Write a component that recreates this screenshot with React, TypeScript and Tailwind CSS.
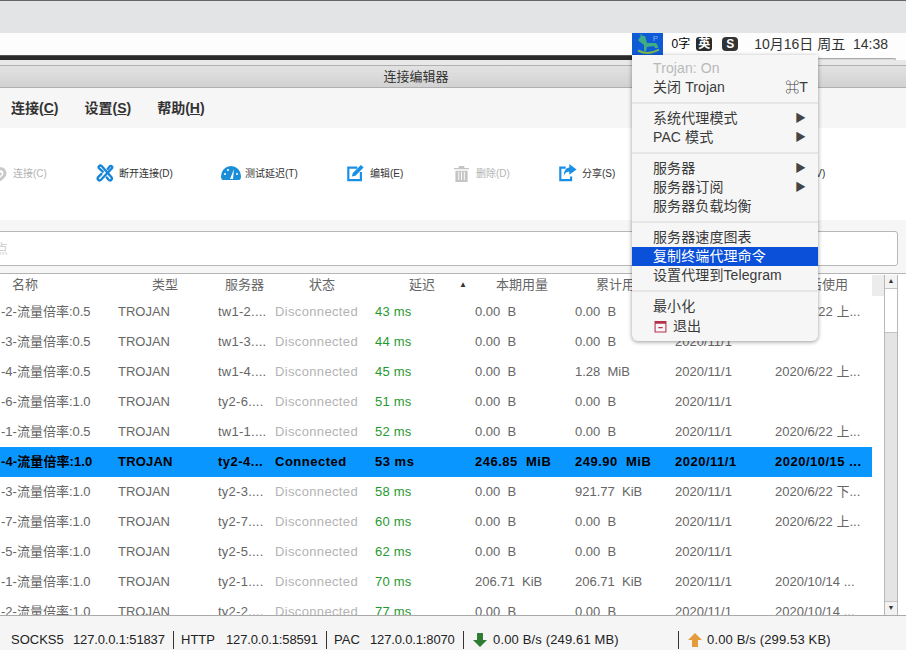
const rows = [
  ["-2-流量倍率:0.5","tw1-2....","43 ms","0.00  B","0.00  B","2020/11/1","2020/6/22 上..."],
  ["-3-流量倍率:0.5","tw1-3....","44 ms","0.00  B","0.00  B","2020/11/1",""],
  ["-4-流量倍率:0.5","tw1-4....","45 ms","0.00  B","1.28  MiB","2020/11/1","2020/6/22 上..."],
  ["-6-流量倍率:1.0","ty2-6....","51 ms","0.00  B","0.00  B","2020/11/1",""],
  ["-1-流量倍率:0.5","tw1-1....","52 ms","0.00  B","0.00  B","2020/11/1","2020/6/22 上..."],
  ["-4-流量倍率:1.0","ty2-4...","53 ms","246.85  MiB","249.90  MiB","2020/11/1","2020/10/15 ..."],
  ["-3-流量倍率:1.0","ty2-3....","58 ms","0.00  B","921.77  KiB","2020/11/1","2020/6/22 下..."],
  ["-7-流量倍率:1.0","ty2-7....","60 ms","0.00  B","0.00  B","2020/11/1","2020/6/22 上..."],
  ["-5-流量倍率:1.0","ty2-5....","62 ms","0.00  B","0.00  B","2020/11/1",""],
  ["-1-流量倍率:1.0","ty2-1....","70 ms","206.71  KiB","206.71  KiB","2020/11/1","2020/10/14 ..."],
  ["-2-流量倍率:1.0","ty2-2....","77 ms","0.00  B","0.00  B","2020/11/1","2020/10/14 ..."],
];
const font = { fontFamily: '"Liberation Sans","Noto Sans CJK SC",sans-serif' };

function Tool({ icon, label, w, dim, gap }: { icon: React.ReactNode; label: string; w: string; dim?: boolean; gap?: string }) {
  return (
    <div className={`flex items-center shrink-0 ${gap ?? "gap-[5px]"} ${w}`}>
      {icon}
      <span className={`text-[10px] whitespace-nowrap ${dim ? "text-[#b4b4b4]" : "text-[#333]"}`}>{label}</span>
    </div>
  );
}
function Row({ r, on }: { r: string[]; on: boolean }) {
  const c = on ? "text-black font-bold tracking-[0.5px]" : "text-[#666]";
  return (
    <div className={`flex h-[30px] items-center text-[13px] whitespace-pre shrink-0 w-[872px] ${on ? "bg-[#0a96ff]" : ""}`}>
      <span className={`w-[118px] shrink-0 pl-px ${on ? "text-black font-bold tracking-[0.1px]" : "text-[#666]"}`}>{r[0]}</span>
      <span className={`w-[100px] shrink-0 ${on ? "text-black font-bold tracking-[0.2px]" : "text-[#666]"}`}>TROJAN</span>
      <span className={`w-[57px] shrink-0 ${on ? c : "text-[#666] tracking-[0.25px]"}`}>{r[1]}</span>
      <span className={`w-[100px] shrink-0 ${on ? c : "text-[#b3b3b3] tracking-[0.35px]"}`}>{on ? "Connected" : "Disconnected"}</span>
      <span className={`w-[100px] shrink-0 ${on ? c : "text-[#1f9a2e] tracking-[0.2px]"}`}>{r[2]}</span>
      <span className={`w-[100px] shrink-0 ${c}`}>{r[3]}</span>
      <span className={`w-[100px] shrink-0 ${c}`}>{r[4]}</span>
      <span className={`w-[100px] shrink-0 ${c}`}>{r[5]}</span>
      <span className={`shrink-0 ${c}`}>{r[6]}</span>
    </div>
  );
}
function MI({ t, arrow, sc, active, dim, extra }: { t: React.ReactNode; arrow?: boolean; sc?: string; active?: boolean; dim?: boolean; extra?: string }) {
  return (
    <div className={`flex h-[19px] items-center pl-[21px] pr-[12px] justify-between text-[14px] tracking-[0.1px] whitespace-nowrap ${extra ?? ""} ${active ? "bg-[#0a50d8] text-white" : dim ? "text-[#b9b9b9]" : "text-[#3a3a3a]"}`}>
      <span className="flex items-center">{t}</span>
      {arrow && <span className="text-[11px] text-[#444]">▶</span>}
      {sc && <span className="text-[14px] -mr-[2px]">{sc}</span>}
    </div>
  );
}
const Sep = () => <div className="h-[12px] flex items-center"><div className="h-[2px] w-full bg-[#e6e6e6]" /></div>;
const Und = ({ a, b }: { a: string; b: string }) => <span className="text-[14px] font-bold text-[#333] whitespace-nowrap">{a}(<span className="underline">{b}</span>)</span>;
const Bar = () => <span className="w-px h-[18px] bg-[#333] shrink-0" />;

export default function App() {
  return (
    <div className="relative w-[906px] h-[650px] overflow-hidden bg-white flex flex-col" style={font}>
      <div className="h-[33px] bg-[#e3e4e6] border-t border-[#666] shrink-0" />
      <div className="h-[22px] bg-[#fdfdfd] shrink-0 flex items-center justify-end pr-[18px] text-[14px] text-[#333]">
        <span className="text-[12px] text-black mr-[6px]">0字</span>
        <span className="w-[16px] h-[14px] rounded-[3px] bg-[#2b2b2b] text-white text-[12px] font-bold flex items-center justify-center mr-[10px]">英</span>
        <span className="w-[16px] h-[14px] rounded-[4px] bg-[#333] text-white text-[12px] font-bold flex items-center justify-center mr-[16px]">S</span>
        <span className="whitespace-pre">10月16日 周五  14:38</span>
      </div>
      <div className="h-[5px] shrink-0 flex">
        <div className="w-[632px] shrink-0 bg-[#2b2b2b] border-t border-[#555]" />
        <div className="flex-1 bg-[#fdfdfd] pr-[10px]">
          <div className="mt-[3px] h-[2px] bg-[#d8d8d8] rounded-tr-[6px] border-t border-r border-[#aaa]" />
        </div>
      </div>
      <div className="h-[6px] shrink-0 bg-[#e8e8e8] border-b border-[#b0b0b0]" />
      <div className="h-[22px] shrink-0 bg-gradient-to-b from-[#e2e2e2] to-[#d2d2d2] border-b border-[#b0b0b0] flex items-center justify-center pr-[74px] text-[13px] text-[#333]">连接编辑器</div>
      <div className="h-[40px] shrink-0 bg-[#f6f6f6] flex items-center pl-[11px] gap-[26px]">
        <Und a="连接" b="C" /><Und a="设置" b="S" /><Und a="帮助" b="H" />
      </div>
      <div className="h-[92px] shrink-0 bg-white flex items-center pb-[2px] overflow-hidden">
        <Tool w="w-[103px] -ml-[7px]" gap="gap-[6px]" dim label="连接(C)" icon={<svg viewBox="0 0 14 18" className="w-[14px] h-[18px]"><path d="M3 9a4.500 4.500 0 1 1 8 3l-3 3c-2 2-5-1-3-3l3-3" fill="none" stroke="#c8c8c8" strokeWidth="3" /></svg>} />
        <Tool w="w-[125px]" label="断开连接(D)" icon={<svg viewBox="0 0 20 20" className="w-[18px] h-[18px]" fill="none" stroke="#1585d8" strokeWidth="2.6" strokeLinecap="round"><path d="M7.500 8.500 3.500 5C1.500 3 4.500 0.500 6.500 2.500L17 14.500C19 17 16 19.500 14 17.500L12 15" /><path d="M13 5.500 15 3C17 1 19 3 17.500 5L5.500 17.500C3.500 19.500 0.500 17 2.500 14.500L6 11" /></svg>} />
        <Tool w="w-[125px]" gap="gap-[4px]" label="测试延迟(T)" icon={<svg viewBox="0 0 20 16" className="w-[20px] h-[16px]"><path d="M0 11a10 10 0 0 1 20 0c0 3-1 4-2 4H2c-1 0-2-1-2-4Z" fill="#1a8fd8" /><path d="M9 14 13 4l-1 10Z" fill="#fff" /><circle cx="4" cy="9" r="1" fill="#fff" /><circle cx="16" cy="9" r="1" fill="#fff" /><circle cx="7" cy="5" r="1" fill="#fff" /></svg>} />
        <Tool w="w-[108px]" label="编辑(E)" icon={<svg viewBox="0 0 20 20" className="w-[19px] h-[18px]"><path d="M12 4H2v14h14V9" fill="none" stroke="#1a8fe6" strokeWidth="2.4" /><path d="M7 10 16 1l3 3-9 9-4 1Z" fill="#1a8fe6" /></svg>} />
        <Tool w="w-[104px]" gap="gap-[7px]" dim label="删除(D)" icon={<svg viewBox="0 0 16 18" className="w-[15px] h-[17px]"><path d="M5 1h6v2h5v1.500H0V3h5ZM1.500 6h13v12h-13Z" fill="#c4c4c4" /><path d="M5 7v9M8 7v9M11 7v9" stroke="#fff" /></svg>} />
        <Tool w="w-[110px]" label="分享(S)" icon={<svg viewBox="0 0 20 20" className="w-[19px] h-[18px]"><path d="M8 4H2v14h12v-4" fill="none" stroke="#1a8fe6" strokeWidth="2.4" /><path d="M12 0l8 6-8 6V8.500c-3 0-5 1-6 5 0-6 2-9 6-9.500Z" fill="#1a8fe6" /></svg>} />
        <Tool w="w-[40px] ml-[144px]" label="(V)" icon={null} />
      </div>
      <div className="h-[53px] shrink-0 bg-[#f6f6f6] pt-[11px]">
        <div className="h-[35px] -ml-[6px] w-[904px] border border-[#b8b8b8] rounded-[3px] bg-white flex items-center text-[13px] text-[#d0d0d0] overflow-hidden whitespace-nowrap">
          <span className="-ml-[13px]">节点</span>
        </div>
      </div>
      <div className="h-[342px] shrink-0 flex border-t border-[#b4b4b4] pt-px overflow-hidden">
        <div className="w-[872px] shrink-0 flex flex-col overflow-hidden">
          <div className="h-[22px] shrink-0 pb-[2px] flex items-center text-[13px] text-[#666] whitespace-nowrap">
            <span className="w-[118px] shrink-0 pl-[12px]">名称</span>
            <span className="w-[100px] shrink-0 pl-[34px]">类型</span>
            <span className="w-[57px] shrink-0 pl-[7px]">服务器</span>
            <span className="w-[100px] shrink-0 pl-[34px]">状态</span>
            <span className="w-[100px] shrink-0 flex items-center pl-[34px]">延迟<span className="ml-[24px] text-[8px] text-[#333]">▲</span></span>
            <span className="w-[100px] shrink-0 pl-[21px]">本期用量</span>
            <span className="w-[100px] shrink-0 pl-[21px]">累计用量</span>
            <span className="w-[100px] shrink-0" />
            <span className="pl-[21px]">最后使用</span>
          </div>
          {rows.map((r, i) => <Row key={i} r={r} on={i === 5} />)}
        </div>
        <div className="w-[12px] shrink-0"><div className="h-[21px] bg-[#ececec]" /></div>
        <div className="w-[14px] shrink-0 flex flex-col border-x border-[#b8b8b8]">
          <div className="h-[14px] shrink-0 bg-[#f2f2f2] border-b border-[#c4c4c4] flex items-center justify-center text-[7px] text-[#333]">▲</div>
          <div className="h-[44px] shrink-0 bg-white border-b border-[#c4c4c4]" />
          <div className="flex-1 bg-[#e4e4e4]" />
          <div className="h-[14px] shrink-0 bg-[#f2f2f2] border-t border-[#c4c4c4] flex items-center justify-center text-[7px] text-[#333]">▼</div>
        </div>
      </div>
      <div className="flex-1 min-h-0 border-t border-[#aaa] bg-[#f5f5f5] flex items-center pl-[11px] pt-[13px] text-[13px] text-[#222] whitespace-nowrap">
        <span className="w-[62px] shrink-0">SOCKS5</span>
        <span className="w-[100px] shrink-0 tracking-[-0.15px]">127.0.0.1:51837</span>
        <Bar />
        <span className="w-[52px] shrink-0 pl-[7px]">HTTP</span>
        <span className="w-[100px] shrink-0 tracking-[-0.15px]">127.0.0.1:58591</span>
        <Bar />
        <span className="w-[43px] shrink-0 pl-[7px]">PAC</span>
        <span className="w-[93px] shrink-0 tracking-[-0.15px]">127.0.0.1:8070</span>
        <Bar />
        <span className="w-[9px] shrink-0" />
        <svg viewBox="0 0 14 14" className="w-[14px] h-[14px] mr-[6px] shrink-0"><path d="M4 0h6v7h4l-7 7-7-7h4Z" fill="#2f7d32" /></svg>
        <span className="w-[185px] shrink-0 tracking-[0.15px]">0.00 B/s (249.61 MB)</span>
        <Bar />
        <span className="w-[9px] shrink-0" />
        <svg viewBox="0 0 14 14" className="w-[14px] h-[14px] mr-[5px] shrink-0"><path d="M4 14h6V7h4L7 0 0 7h4Z" fill="#e59a3c" /></svg>
        <span className="tracking-[0.15px]">0.00 B/s (299.53 KB)</span>
      </div>

      <div className="absolute left-[632px] top-[33px] w-[31px] h-[22px] bg-[#0f5bd6]">
        <svg viewBox="0 0 31 22" className="w-[31px] h-[22px]">
          <path d="M6 17.500Q16 23 27 16.500" fill="none" stroke="#7fb84e" strokeWidth="2" />
          <path d="M6 7 9 3h4l2 7h7c3 0 4 2 4 5h-3l-1-2-7 1-1 4h-2v-6L8 9Z" fill="#3fae84" />
          <path d="M9 3 7 1l4 1Z" fill="#3fae84" />
        </svg>
        <span className="absolute right-[5px] top-0 text-[8px] text-[#7fb0ff]">P</span>
      </div>
      <div className="absolute left-[632px] top-[55px] w-[186px] h-[286px] bg-[#f6f6f6] rounded-b-[6px] shadow-[0_1px_4px_rgba(0,0,0,0.4)] pt-[4px]">
        <MI t="Trojan: On" dim />
        <MI t="关闭 Trojan" sc="⌘T" />
        <Sep />
        <MI t="系统代理模式" arrow />
        <MI t="PAC 模式" arrow />
        <Sep />
        <MI t="服务器" arrow />
        <MI t="服务器订阅" arrow />
        <MI t="服务器负载均衡" />
        <Sep />
        <MI t="服务器速度图表" />
        <MI t="复制终端代理命令" active />
        <MI t="设置代理到Telegram" />
        <Sep />
        <MI t="最小化" />
        <MI extra="mt-px" t={<><svg viewBox="0 0 12 12" className="w-[13px] h-[13px] ml-px mr-[6px]"><path d="M1 1.500h10v9.500H1Z" fill="none" stroke="#b5304e" /><path d="M1 1.500h10v2H1ZM4 6.500h4v1H4Z" fill="#b5304e" /></svg>退出</>} />
      </div>
    </div>
  );
}
